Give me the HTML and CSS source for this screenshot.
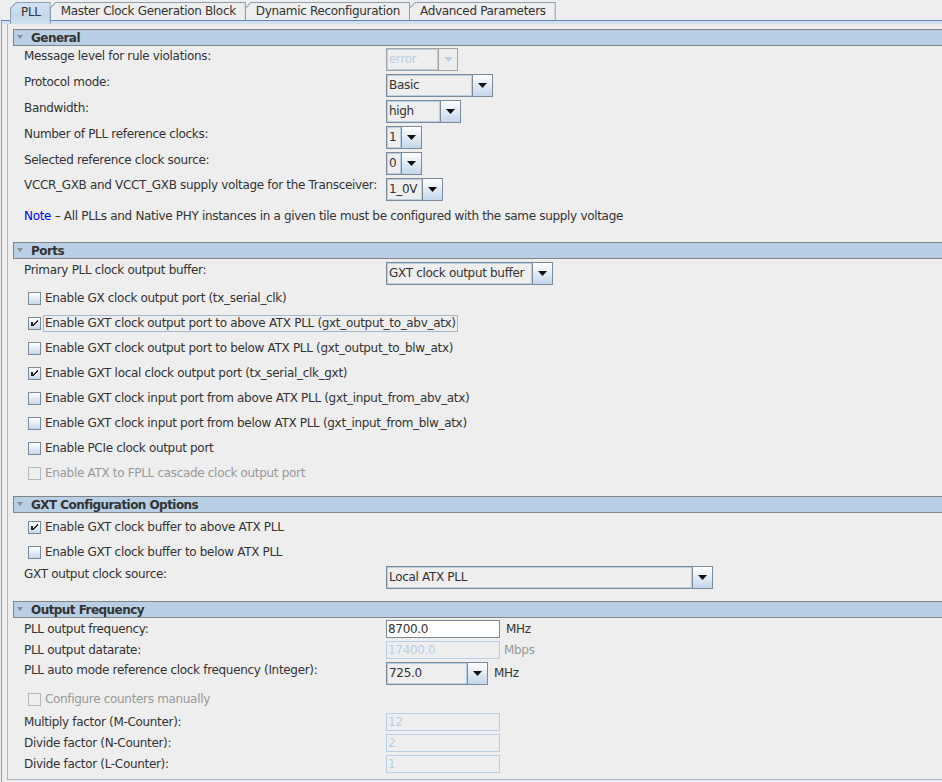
FILE: index.html
```html
<!DOCTYPE html>
<html>
<head>
<meta charset="utf-8">
<title>PLL</title>
<link rel="stylesheet" href="styles.css">
</head>
<body>
<div class="tabs">
  <div class="tab sel"><span>PLL</span></div>
  <div class="tab"><span>Master Clock Generation Block</span></div>
  <div class="tab"><span>Dynamic Reconfiguration</span></div>
  <div class="tab"><span>Advanced Parameters</span></div>
</div>
<div class="pane">
  <div class="band"></div>
  <div class="panel">

    <div class="hdr"><svg class="tri" width="6" height="4" viewBox="0 0 6 4"><path d="M0 0H6L3 4Z" fill="#8c8c8c"/></svg><span>General</span></div>
    <div class="body b-general">
      <div class="row"><div class="lbl">Message level for rule violations:</div>
        <div class="combo dis w72"><div class="val">error</div><div class="btn"><svg width="9" height="5" viewBox="0 0 9 5"><path d="M0 0H9L4.5 5Z"/></svg></div></div></div>
      <div class="row"><div class="lbl">Protocol mode:</div>
        <div class="combo w107"><div class="val">Basic</div><div class="btn"><svg width="9" height="5" viewBox="0 0 9 5"><path d="M0 0H9L4.5 5Z"/></svg></div></div></div>
      <div class="row"><div class="lbl">Bandwidth:</div>
        <div class="combo w75"><div class="val">high</div><div class="btn"><svg width="9" height="5" viewBox="0 0 9 5"><path d="M0 0H9L4.5 5Z"/></svg></div></div></div>
      <div class="row"><div class="lbl">Number of PLL reference clocks:</div>
        <div class="combo w36"><div class="val">1</div><div class="btn"><svg width="9" height="5" viewBox="0 0 9 5"><path d="M0 0H9L4.5 5Z"/></svg></div></div></div>
      <div class="row"><div class="lbl">Selected reference clock source:</div>
        <div class="combo w36"><div class="val">0</div><div class="btn"><svg width="9" height="5" viewBox="0 0 9 5"><path d="M0 0H9L4.5 5Z"/></svg></div></div></div>
      <div class="row"><div class="lbl lbl-vcc">VCCR_GXB and VCCT_GXB supply voltage for the Transceiver:</div>
        <div class="combo w57"><div class="val">1_0V</div><div class="btn"><svg width="9" height="5" viewBox="0 0 9 5"><path d="M0 0H9L4.5 5Z"/></svg></div></div></div>
      <div class="note"><span class="note-k">Note</span> – All PLLs and Native PHY instances in a given tile must be configured with the same supply voltage</div>
    </div>

    <div class="hdr"><svg class="tri" width="6" height="4" viewBox="0 0 6 4"><path d="M0 0H6L3 4Z" fill="#8c8c8c"/></svg><span>Ports</span></div>
    <div class="body b-ports">
      <div class="row"><div class="lbl">Primary PLL clock output buffer:</div>
        <div class="combo w167"><div class="val">GXT clock output buffer</div><div class="btn"><svg width="9" height="5" viewBox="0 0 9 5"><path d="M0 0H9L4.5 5Z"/></svg></div></div></div>
      <div class="checks">
        <div class="cb"><span class="box"></span><span class="cbt">Enable GX clock output port (tx_serial_clk)</span></div>
        <div class="cb"><span class="box"><svg class="chk" width="11" height="11" viewBox="1 1 11 11"><path d="M3 5h2v4h-2zM9 3h1v2h-1zM8 4h1v2h-1zM7 5h1v2h-1zM6 6h1v2h-1zM5 7h1v2h-1z"/></svg></span><span class="cbt focus">Enable GXT clock output port to above ATX PLL (gxt_output_to_abv_atx)</span></div>
        <div class="cb"><span class="box"></span><span class="cbt">Enable GXT clock output port to below ATX PLL (gxt_output_to_blw_atx)</span></div>
        <div class="cb"><span class="box"><svg class="chk" width="11" height="11" viewBox="1 1 11 11"><path d="M3 5h2v4h-2zM9 3h1v2h-1zM8 4h1v2h-1zM7 5h1v2h-1zM6 6h1v2h-1zM5 7h1v2h-1z"/></svg></span><span class="cbt">Enable GXT local clock output port (tx_serial_clk_gxt)</span></div>
        <div class="cb"><span class="box"></span><span class="cbt">Enable GXT clock input port from above ATX PLL (gxt_input_from_abv_atx)</span></div>
        <div class="cb"><span class="box"></span><span class="cbt">Enable GXT clock input port from below ATX PLL (gxt_input_from_blw_atx)</span></div>
        <div class="cb"><span class="box"></span><span class="cbt">Enable PCIe clock output port</span></div>
        <div class="cb dis"><span class="box"></span><span class="cbt">Enable ATX to FPLL cascade clock output port</span></div>
      </div>
    </div>

    <div class="hdr"><svg class="tri" width="6" height="4" viewBox="0 0 6 4"><path d="M0 0H6L3 4Z" fill="#8c8c8c"/></svg><span>GXT Configuration Options</span></div>
    <div class="body b-gxt">
      <div class="checks">
        <div class="cb"><span class="box"><svg class="chk" width="11" height="11" viewBox="1 1 11 11"><path d="M3 5h2v4h-2zM9 3h1v2h-1zM8 4h1v2h-1zM7 5h1v2h-1zM6 6h1v2h-1zM5 7h1v2h-1z"/></svg></span><span class="cbt">Enable GXT clock buffer to above ATX PLL</span></div>
        <div class="cb"><span class="box"></span><span class="cbt">Enable GXT clock buffer to below ATX PLL</span></div>
      </div>
      <div class="row"><div class="lbl">GXT output clock source:</div>
        <div class="combo w327"><div class="val">Local ATX PLL</div><div class="btn"><svg width="9" height="5" viewBox="0 0 9 5"><path d="M0 0H9L4.5 5Z"/></svg></div></div></div>
    </div>

    <div class="hdr"><svg class="tri" width="6" height="4" viewBox="0 0 6 4"><path d="M0 0H6L3 4Z" fill="#8c8c8c"/></svg><span>Output Frequency</span></div>
    <div class="body b-out">
      <div class="row r-tf"><div class="lbl">PLL output frequency:</div><div class="tf">8700.0</div><div class="unit">MHz</div></div>
      <div class="row r-tf"><div class="lbl">PLL output datarate:</div><div class="tf dis">17400.0</div><div class="unit dis">Mbps</div></div>
      <div class="row"><div class="lbl">PLL auto mode reference clock frequency (Integer):</div>
        <div class="combo w102"><div class="val">725.0</div><div class="btn"><svg width="9" height="5" viewBox="0 0 9 5"><path d="M0 0H9L4.5 5Z"/></svg></div></div><div class="unit">MHz</div></div>
      <div class="cb dis cb-counters"><span class="box"></span><span class="cbt">Configure counters manually</span></div>
      <div class="row r-tf"><div class="lbl">Multiply factor (M-Counter):</div><div class="tf dis">12</div></div>
      <div class="row r-tf"><div class="lbl">Divide factor (N-Counter):</div><div class="tf dis">2</div></div>
      <div class="row r-tf"><div class="lbl">Divide factor (L-Counter):</div><div class="tf dis">1</div></div>
    </div>

  </div>
</div>
</body>
</html>
```
FILE: styles.css
```css
* { box-sizing: border-box; }
html, body { margin: 0; padding: 0; }
body {
  width: 942px;
  height: 782px;
  overflow: hidden;
  background: #eeeeee;
  font-family: "DejaVu Sans", "Liberation Sans", sans-serif;
  font-size: 12px;
  letter-spacing: -0.32px;
  color: #333333;
}

/* ---------- tabs ---------- */
.tabs {
  display: flex;
  align-items: flex-start;
  height: 20px;
  padding: 2px 0 0 10px;
  position: relative;
  z-index: 2;
}
.tab {
  height: 18px;
  padding: 1px 1px 0 1px;
  margin-right: -1px;
  background: #8e9fb1;
  clip-path: polygon(0 6px, 6px 0, 100% 0, 100% 100%, 0 100%);
}
.tab span {
  display: block;
  height: 17px;
  line-height: 17px;
  padding: 0 9px 0 10px;
  white-space: nowrap;
  background: #eeeeee;
  clip-path: polygon(0 5.4px, 5.4px 0, 100% 0, 100% 100%, 0 100%);
}
.tab.sel {
  height: 22px;
  padding-bottom: 0;
}
.tab.sel span {
  height: 21px;
  line-height: 18px;
  background: linear-gradient(#d4e3f2, #c3d7ec 60%, #d0e0f0);
}

/* ---------- pane ---------- */
.pane {
  margin-left: 1px;
  height: 762px;
  border-top: 1px solid #6382bf;
  border-left: 1px solid #8e9fb1;
}
.band {
  height: 3px;
  background: #d3e1ef;
}
.panel {
  margin: 0 0 0 5px;
  padding: 5px 0 0 5px;
  height: 756px;
  border-left: 1px solid #a8b8c8;
  border-bottom: 1px solid #a8b8c8;
}

/* ---------- section header ---------- */
.hdr {
  display: flex;
  align-items: center;
  height: 17px;
  border: 1px solid #858585;
  border-right: none;
  background: #b8cfe5;
  font-weight: bold;
  letter-spacing: -0.55px;
}
.hdr .tri { margin: -1px 8px 0 3px; }

/* ---------- rows ---------- */
.body { padding-left: 11px; }
.row {
  display: flex;
  align-items: flex-start;
  height: 23px;
  margin-top: 3px;
}
.lbl {
  width: 362px;
  flex: none;
  line-height: 15px;
  padding-top: 1px;
  white-space: nowrap;
}
.lbl-vcc { padding-top: 0; }
.b-general .row:first-child { margin-top: 2px; }
.note {
  margin-top: 7px;
  line-height: 16px;
  height: 16px;
  margin-bottom: 18px;
}
.note-k { color: #0000ff; }

/* ---------- combo ---------- */
.combo {
  display: flex;
  height: 23px;
  border: 1px solid #7a8a99;
  flex: none;
}
.combo .val {
  flex: 1;
  border: 1px solid #b8cfe5;
  background: #eeeeee;
  padding-left: 1px;
  line-height: 19px;
  white-space: nowrap;
  overflow: hidden;
}
.combo .btn {
  width: 20px;
  flex: none;
  border-left: 1px solid #7a8a99;
  background: linear-gradient(#ffffff, #c4d6ea);
  display: flex;
  align-items: center;
  justify-content: center;
}
.combo .btn svg { fill: #111111; }
.combo.dis { border-color: #a3a3a3; }
.combo.dis .val { color: #b8cfe5; border-color: #b8cfe5; }
.combo.dis .btn { background: #eeeeee; border-left-color: #a3a3a3; }
.combo.dis .btn svg { fill: #b8cfe5; }
.w36 { width: 36px; }
.w57 { width: 57px; }
.w72 { width: 72px; }
.w72 .btn { width: 19px; }
.w75 { width: 75px; }
.w102 { width: 102px; }
.w107 { width: 107px; }
.w167 { width: 167px; }
.w327 { width: 327px; }

/* ---------- checkbox ---------- */
.checks {
  display: flex;
  flex-direction: column;
  gap: 4px;
}
.b-ports .checks { margin-top: 3px; margin-bottom: 12px; }
.b-gxt .checks { margin-top: 4px; }
.cb {
  display: flex;
  align-items: center;
  height: 21px;
  padding-left: 4px;
  white-space: nowrap;
}
.box {
  width: 13px;
  height: 13px;
  flex: none;
  border: 1px solid #7a8a99;
  background: linear-gradient(#ffffff, #c8d8ea);
  margin-right: 2px;
}
.chk { display: block; fill: #222222; shape-rendering: crispEdges; }
.cbt { padding: 0 1px; line-height: 15px; border: 1px solid transparent; }
.cbt.focus { border-color: #a3b8cc; }
.cb.dis .box { background: #eeeeee; border-color: #b0b8c0; }
.cb.dis .cbt { color: #999999; }
.b-gxt { margin-bottom: 12px; }

/* ---------- output frequency ---------- */
.b-out .row:first-child { margin-top: 2px; }
.r-tf { height: 18px; }
.r-tf .lbl { line-height: 18px; padding-top: 0; }
.tf {
  width: 114px;
  height: 18px;
  flex: none;
  border: 1px solid #7a8a99;
  background: #ffffff;
  padding-left: 1px;
  line-height: 16px;
}
.tf.dis { background: #eeeeee; border-color: #b8cfe5; color: #b8cfe5; }
.unit { margin-left: 6px; line-height: 18px; }
.unit.dis { color: #999999; margin-left: 4px; }
.combo + .unit { line-height: 23px; }
.cb-counters { margin-top: 4px; }
.cb-counters + .row { margin-top: 3px; }
```
